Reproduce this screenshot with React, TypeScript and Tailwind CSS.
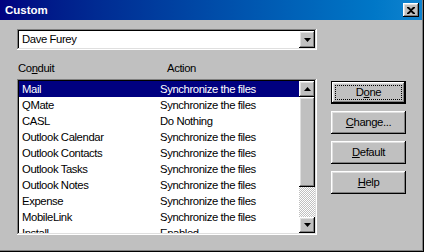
import React from "react";

const rows: [string, string][] = [
  ["Mail", "Synchronize the files"],
  ["QMate", "Synchronize the files"],
  ["CASL", "Do Nothing"],
  ["Outlook Calendar", "Synchronize the files"],
  ["Outlook Contacts", "Synchronize the files"],
  ["Outlook Tasks", "Synchronize the files"],
  ["Outlook Notes", "Synchronize the files"],
  ["Expense", "Synchronize the files"],
  ["MobileLink", "Synchronize the files"],
  ["Install", "Enabled"],
];

const raised =
  "bg-[#c0c0c0] shadow-[inset_-1px_-1px_#000,inset_1px_1px_#fff,inset_-2px_-2px_#808080,inset_2px_2px_#dfdfdf]";
const sunken =
  "shadow-[inset_-1px_-1px_#fff,inset_1px_1px_#808080,inset_-2px_-2px_#dfdfdf,inset_2px_2px_#000]";

const Arrow: React.FC<{ up?: boolean }> = ({ up }) => (
  <svg width="7" height="4" viewBox="0 0 7 4">
    {up ? <path d="M3.5 0 L7 4 L0 4 Z" fill="#000" /> : <path d="M0 0 L7 0 L3.5 4 Z" fill="#000" />}
  </svg>
);

const Btn: React.FC<{ pre?: string; u: string; post: string; def?: boolean }> = ({ pre, u, post, def }) => {
  const label = (
    <span>
      {pre}
      <span className="underline underline-offset-1">{u}</span>
      {post}
    </span>
  );
  if (def) {
    return (
      <div className="w-[75px] h-[23px] border border-black">
        <div className={`w-full h-full flex items-center justify-center p-[3px] ${raised}`}>
          <div className="w-full h-full border border-dotted border-black flex items-center justify-center">{label}</div>
        </div>
      </div>
    );
  }
  return <div className={`w-[75px] h-[23px] flex items-center justify-center ${raised}`}>{label}</div>;
};

export default function App() {
  return (
    <div
      className="w-[424px] h-[252px] bg-[#c0c0c0] text-black text-[11.3px] tracking-[-0.4px] leading-[13px] shadow-[inset_-1px_-1px_#000,inset_-2px_-2px_#808080] flex flex-col overflow-hidden"
      style={{ fontFamily: '"Liberation Sans", Arial, sans-serif' }}
    >
      {/* title bar */}
      <div className="h-[20px] mr-[2px] bg-linear-to-r from-[#000080] to-[#1084d0] flex items-center justify-between pl-[5px] pr-[3px]">
        <span className="text-white font-bold text-[11.5px] tracking-normal">Custom</span>
        <div className={`w-[16px] h-[14px] flex items-center justify-center ${raised}`}>
          <svg width="8" height="7" viewBox="0 0 8 7">
            <path d="M0 0h2l2 2 2-2h2v1L5 3.5 8 6v1H6L4 5 2 7H0V6l3-2.5L0 1z" fill="#000" />
          </svg>
        </div>
      </div>

      <div className="flex pl-[17px]">
        <div className="w-[300px] flex flex-col">
          {/* combo */}
          <div className={`mt-[9px] h-[21px] bg-white p-[2px] flex ${sunken}`}>
            <div className="flex-1 flex items-center pl-[3px]">Dave Furey</div>
            <div className={`w-[16px] h-[17px] flex items-center justify-center ${raised}`}>
              <Arrow />
            </div>
          </div>

          {/* headers */}
          <div className="h-[29px] flex items-end pb-[4px]">
            <span className="w-[150px] pl-[1px]">
              Co<span className="underline underline-offset-1">n</span>duit
            </span>
            <span>Action</span>
          </div>

          {/* list */}
          <div className={`h-[156px] bg-white p-[2px] flex ${sunken}`}>
            <div className="flex-1 overflow-hidden">
              {rows.map(([c, a], i) => (
                <div
                  key={c}
                  className={`h-[16px] flex items-center pl-[3px] ${i === 0 ? "bg-[#000080] text-white" : ""}`}
                >
                  <span className="w-[138px]">{c}</span>
                  <span>{a}</span>
                </div>
              ))}
            </div>
            <div className="w-[16px] flex flex-col">
              <div className={`h-[16px] flex items-center justify-center ${raised}`}>
                <Arrow up />
              </div>
              <div className={`h-[90px] ${raised}`} />
              <div className="flex-1 bg-[repeating-conic-gradient(#c0c0c0_0_25%,#ffffff_0_50%)] bg-[length:2px_2px]" />
              <div className={`h-[16px] flex items-center justify-center ${raised}`}>
                <Arrow />
              </div>
            </div>
          </div>
        </div>

        {/* buttons */}
        <div className="ml-[14px] pt-[61px] flex flex-col gap-[7px]">
          <Btn pre="D" u="o" post="ne" def />
          <Btn u="C" post="hange..." />
          <Btn u="D" post="efault" />
          <Btn u="H" post="elp" />
        </div>
      </div>
    </div>
  );
}
